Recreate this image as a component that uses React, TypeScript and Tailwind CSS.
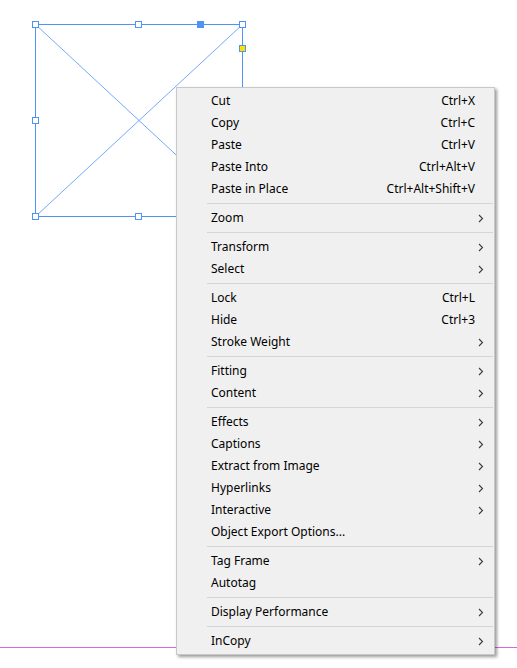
import { Fragment } from 'react';

// Menu structure: each group is separated by a thin rule
type Item = { label: string; shortcut?: string; submenu?: boolean };

const groups: Item[][] = [
  [
    { label: 'Cut', shortcut: 'Ctrl+X' },
    { label: 'Copy', shortcut: 'Ctrl+C' },
    { label: 'Paste', shortcut: 'Ctrl+V' },
    { label: 'Paste Into', shortcut: 'Ctrl+Alt+V' },
    { label: 'Paste in Place', shortcut: 'Ctrl+Alt+Shift+V' },
  ],
  [{ label: 'Zoom', submenu: true }],
  [
    { label: 'Transform', submenu: true },
    { label: 'Select', submenu: true },
  ],
  [
    { label: 'Lock', shortcut: 'Ctrl+L' },
    { label: 'Hide', shortcut: 'Ctrl+3' },
    { label: 'Stroke Weight', submenu: true },
  ],
  [
    { label: 'Fitting', submenu: true },
    { label: 'Content', submenu: true },
  ],
  [
    { label: 'Effects', submenu: true },
    { label: 'Captions', submenu: true },
    { label: 'Extract from Image', submenu: true },
    { label: 'Hyperlinks', submenu: true },
    { label: 'Interactive', submenu: true },
    { label: 'Object Export Options...' },
  ],
  [
    { label: 'Tag Frame', submenu: true },
    { label: 'Autotag' },
  ],
  [{ label: 'Display Performance', submenu: true }],
  [{ label: 'InCopy', submenu: true }],
];

function Chevron() {
  return (
    <svg width="6" height="9" viewBox="0 0 6 9" className="block">
      <path d="M1 1 L4.5 4.5 L1 8" fill="none" stroke="#3c3c3c" strokeWidth="1.1" />
    </svg>
  );
}

function MenuRow({ item }: { item: Item }) {
  return (
    <div className="flex h-[22px] items-center pl-[34px] pr-[9px] text-[12px] text-black">
      <span className="flex-1">{item.label}</span>
      {item.shortcut && <span className="mr-[2px]">{item.shortcut}</span>}
      <span className="flex w-[8px] justify-center">{item.submenu && <Chevron />}</span>
    </div>
  );
}

// Selected frame with handles, drawn as a picture
function Frame() {
  const blue = '#4f94f3';
  const handles = [
    [35, 24],
    [138, 24],
    [242, 24],
    [35, 120],
    [35, 216],
    [138, 216],
  ];
  return (
    <svg width="260" height="230" className="absolute left-0 top-0">
      <rect x="35.5" y="24.5" width="207" height="192" fill="none" stroke={blue} strokeWidth="1" />
      <line x1="35.5" y1="24.5" x2="242.5" y2="216.5" stroke={blue} strokeWidth="0.8" />
      <line x1="242.5" y1="24.5" x2="35.5" y2="216.5" stroke={blue} strokeWidth="0.8" />
      {handles.map(([x, y]) => (
        <rect key={`${x}-${y}`} x={x - 2.5} y={y - 2.5} width="6" height="6" fill="white" stroke={blue} strokeWidth="1" />
      ))}
      <rect x="197" y="21" width="7" height="7" fill={blue} />
      <rect x="239.5" y="45.5" width="6" height="6" fill="#ffe000" stroke={blue} strokeWidth="1" />
    </svg>
  );
}

export default function App() {
  return (
    <div
      className="relative h-[668px] w-[517px] overflow-hidden bg-white"
      style={{ fontFamily: '"Noto Sans", "Open Sans", sans-serif' }}
    >
      <Frame />
      <div className="absolute left-0 top-[647px] h-px w-full bg-[#d966df]" />

      <div className="absolute left-[176px] top-[87px] w-[319px] border border-[#c8c8c8] bg-[#f0f0f0] py-[2px] shadow-[2px_2px_3px_rgba(0,0,0,0.4)]">
        {groups.map((group, gi) => (
          <Fragment key={gi}>
            {gi > 0 && <div className="my-[3px] ml-[30px] mr-[1px] h-px bg-[#d5d5d5]" />}
            {group.map((item) => (
              <MenuRow key={item.label} item={item} />
            ))}
          </Fragment>
        ))}
      </div>
    </div>
  );
}
